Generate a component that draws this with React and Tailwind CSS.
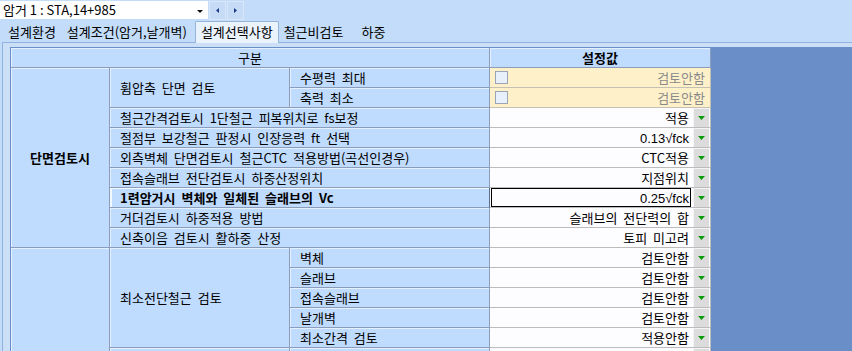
import React from 'react';

const font = "font-['Noto_Sans_CJK_KR','Liberation_Sans',sans-serif]";

const lab = 'bg-[#bfdbfd] border-r border-b border-[#8c9dbb] shadow-[inset_1px_1px_0_#e4efff] flex items-center overflow-hidden whitespace-nowrap leading-[19px]';

const Drop = () => (
    <div className="w-[16px] h-full mr-px flex items-center justify-center bg-[#dcdcdc] border-t border-l border-[#f4f4f4] border-r-[#9a9a9a] border-b-[#9a9a9a]">
        <svg width="7" height="4" viewBox="0 0 7 4">
            <polygon points="0,0 7,0 3.5,4" fill="#0c9a0c" />
        </svg>
    </div>
);

const Val = ({ text, chk, sel, latin }) => {
    if (chk) {
        return (
            <div className="bg-[#fef1c9] border-r border-b border-[#c4c0b4] flex items-center">
                <span className="ml-[5px] w-[13px] h-[13px] border border-[#9aa6b8] bg-[#e8f0fb]" />
                <span className="flex-1 text-right pr-[5px] text-[#8a8a8a] leading-[19px]">{text}</span>
            </div>
        );
    }
    return (
        <div className="bg-[#fdfcff] border-r border-b border-[#bcbcbc] flex items-stretch">
            <div className={`flex-1 ml-px mr-[2px] pr-px text-right leading-[17px] whitespace-nowrap border ${sel ? 'border-black' : 'border-transparent'}`}>
                {latin ? <span className="font-['Liberation_Sans',sans-serif] text-[13px]">{text}</span> : text}
            </div>
            <Drop />
        </div>
    );
};

const TopBar = () => (
    <div className="h-[20px] flex items-start">
        <div className="mt-px w-[208px] h-[18px] bg-white flex items-center">
            <span className="flex-1 pl-[3px] leading-[18px] [word-spacing:0px]">암거 1 : STA,14+985</span>
            <svg width="6" height="3" viewBox="0 0 6 3" className="mr-[5px] mt-[2px]">
                <polygon points="0,0 6,0 3,3" fill="#111" />
            </svg>
        </div>
        <div className="ml-[1px] mt-px w-[17px] h-[19px] bg-[#c6dcf6] border border-[#d8e6f8] flex items-center justify-center">
            <svg width="3" height="5" viewBox="0 0 3 5">
                <polygon points="3,0 3,5 0,2.5" fill="#1b3a86" />
            </svg>
        </div>
        <div className="ml-px mt-px w-[17px] h-[19px] bg-[#c6dcf6] border border-[#d8e6f8] flex items-center justify-center">
            <svg width="3" height="5" viewBox="0 0 3 5">
                <polygon points="0,0 0,5 3,2.5" fill="#1b3a86" />
            </svg>
        </div>
    </div>
);

const Tabs = () => (
    <div className="h-[22px] flex items-end relative z-10">
        <span className="ml-[8px] h-[21px] leading-[21px]">설계환경</span>
        <span className="ml-[11px] h-[21px] leading-[21px]">설계조건(암거,날개벽)</span>
        <span className="ml-[8px] px-[5px] leading-[20px] bg-[#eaf2fc] border border-b-0 border-[#98b4da] rounded-t-[2px] mb-[-1px] h-[22px]">설계선택사항</span>
        <span className="ml-[5px] h-[21px] leading-[21px]">철근비검토</span>
        <span className="ml-[18px] h-[21px] leading-[21px]">하중</span>
    </div>
);

const values = [
    { text: '검토안함', chk: true },
    { text: '검토안함', chk: true },
    { text: '적용' },
    { text: '0.13√fck', latin: true },
    { text: 'CTC적용' },
    { text: '지점위치' },
    { text: '0.25√fck', sel: true, latin: true },
    { text: '슬래브의 전단력의 합' },
    { text: '토피 미고려' },
    { text: '검토안함' },
    { text: '검토안함' },
    { text: '검토안함' },
    { text: '검토안함' },
    { text: '적용안함' },
    { text: '' },
];

export default function App() {
    const v = values.map((x, i) => <Val key={i} {...x} />);
    return (
        <div className={`w-[852px] h-[351px] overflow-hidden bg-[#c2dcf9] text-[13px] [word-spacing:3px] text-black ${font}`}>
            <TopBar />
            <Tabs />
            <div className="ml-[2px] w-[880px] h-[320px] border-l border-t border-[#8fb2de] bg-[#cbdff7] pl-[7px] pt-[4px]">
                <div className="h-full bg-[#6a8ec8] pl-px pt-px">
                    <div className="grid grid-cols-[99px_180px_200px_221px] auto-rows-[20px] w-[700px]">
                        <div className={`${lab} col-span-3 justify-center`}>구분</div>
                        <div className={`${lab} justify-center font-bold`}>설정값</div>

                        <div className={`${lab} row-span-9 justify-center font-bold`}>단면검토시</div>
                        <div className={`${lab} row-span-2 pl-[10px]`}>휨압축 단면 검토</div>
                        <div className={`${lab} pl-[10px]`}>수평력 최대</div>
                        {v[0]}
                        <div className={`${lab} pl-[10px]`}>축력 최소</div>
                        {v[1]}
                        <div className={`${lab} col-span-2 pl-[10px]`}>철근간격검토시 1단철근 피복위치로 fs보정</div>
                        {v[2]}
                        <div className={`${lab} col-span-2 pl-[10px]`}>절점부 보강철근 판정시 인장응력 ft 선택</div>
                        {v[3]}
                        <div className={`${lab} col-span-2 pl-[10px]`}>외측벽체 단면검토시 철근CTC 적용방법(곡선인경우)</div>
                        {v[4]}
                        <div className={`${lab} col-span-2 pl-[10px]`}>접속슬래브 전단검토시 하중산정위치</div>
                        {v[5]}
                        <div className={`${lab} col-span-2 pl-[10px] font-bold shadow-[inset_2px_1px_0_#f4f8ff] border-r-[#5c6f92]`}>1련암거시 벽체와 일체된 슬래브의 Vc</div>
                        {v[6]}
                        <div className={`${lab} col-span-2 pl-[10px]`}>거더검토시 하중적용 방법</div>
                        {v[7]}
                        <div className={`${lab} col-span-2 pl-[10px]`}>신축이음 검토시 활하중 산정</div>
                        {v[8]}

                        <div className={`${lab} row-span-6`} />
                        <div className={`${lab} row-span-5 pl-[10px]`}>최소전단철근 검토</div>
                        <div className={`${lab} pl-[10px]`}>벽체</div>
                        {v[9]}
                        <div className={`${lab} pl-[10px]`}>슬래브</div>
                        {v[10]}
                        <div className={`${lab} pl-[10px]`}>접속슬래브</div>
                        {v[11]}
                        <div className={`${lab} pl-[10px]`}>날개벽</div>
                        {v[12]}
                        <div className={`${lab} pl-[10px]`}>최소간격 검토</div>
                        {v[13]}
                        <div className={lab} />
                        <div className={lab} />
                        {v[14]}
                    </div>
                </div>
            </div>
        </div>
    );
}
